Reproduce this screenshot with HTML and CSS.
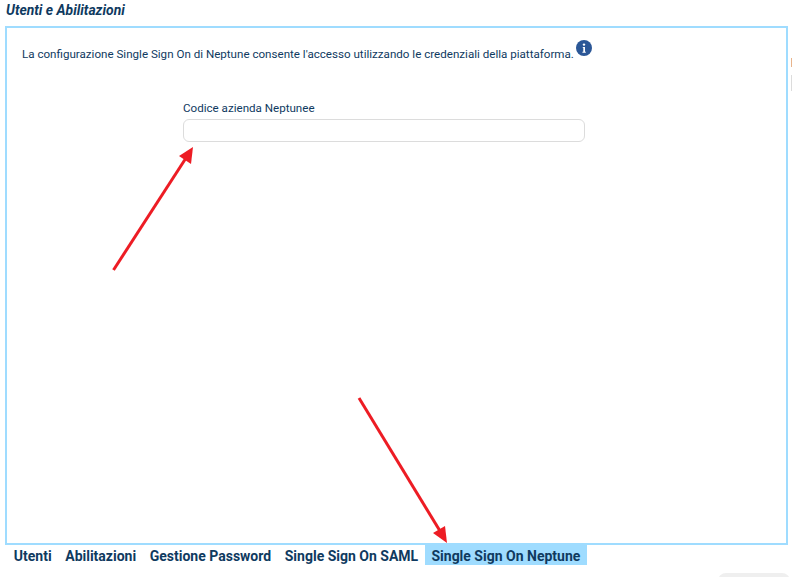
FILE: index.html
```html
<!DOCTYPE html>
<html lang="it">
<head>
    <meta charset="UTF-8">
    <title>Utenti e Abilitazioni</title>
    <link rel="stylesheet" href="styles.css">
</head>
<body>
    <div class="page">
        <h1 class="page_title">Utenti e Abilitazioni</h1>

        <div class="panel">
            <div class="intro">
                <span>La configurazione Single Sign On di Neptune consente l'accesso utilizzando le credenziali della piattaforma.</span>
                <svg class="info_icon" viewBox="0 0 16 16" aria-hidden="true">
                    <circle cx="8" cy="8" r="8" fill="#2b5797"/>
                    <circle cx="8" cy="4.6" r="1.2" fill="#fff"/>
                    <path d="M6.8 7.1h2.2v4.6h.8v1H6.4v-1h.9V8.1h-.5z" fill="#fff"/>
                </svg>
            </div>

            <div class="field">
                <label class="field_label" for="codice">Codice azienda Neptunee</label>
                <input class="field_input" id="codice" type="text">
            </div>
        </div>

        <div class="tabs">
            <span class="tab">Utenti</span>
            <span class="tab">Abilitazioni</span>
            <span class="tab">Gestione Password</span>
            <span class="tab">Single Sign On SAML</span>
            <span class="tab tab_active">Single Sign On Neptune</span>
        </div>

        <div class="corner_pill"></div>
    </div>

    <!-- next field, cut off by the right edge of the window -->
    <div class="edge_label"></div>
    <div class="edge_input"></div>

    <!-- red annotation arrows drawn on top of the screenshot -->
    <svg class="arrows" viewBox="0 0 792 577" aria-hidden="true">
        <line x1="113.5" y1="270" x2="186" y2="158" stroke="#ed1c24" stroke-width="3"/>
        <polygon points="193,147 191,164 179,156" fill="#ed1c24"/>
        <line x1="359" y1="398" x2="440" y2="531" stroke="#ed1c24" stroke-width="3"/>
        <polygon points="447,543 433,533 445,526" fill="#ed1c24"/>
    </svg>
</body>
</html>
```

FILE: styles.css
```css
/*tag*/
html, body{
    margin: 0;
    height: 100%;
    overflow: hidden;
    background: #fff;
}
body{
    position: relative;
    font-family: Roboto, "Liberation Sans", sans-serif;
    color: #0f3a5f;
}

/*class*/
.page{
    display: flex;
    flex-direction: column;
    align-items: flex-start;
    padding: 0 4px 0 5px;
    height: 577px;
    box-sizing: border-box;
}
.page_title{
    margin: 0;
    padding: 1px 0 0 1px;
    height: 26px;
    box-sizing: border-box;
    line-height: 19px;
    font-size: 13.9px;
    font-style: italic;
    font-weight: 700;
    color: #0f3a5f;
}
.panel{
    width: 783px;
    height: 519px;
    box-sizing: border-box;
    border: 2px solid #9fdcff;
    padding: 12px 15px 0;
}
.intro{
    display: flex;
    align-items: flex-start;
    font-size: 11.6px;
    line-height: 14px;
    height: 55px;
    padding-top: 7px;
    box-sizing: border-box;
}
.info_icon{
    width: 16px;
    height: 16px;
    margin: -7px 0 0 2px;
}
.field{
    display: flex;
    flex-direction: column;
    width: 402px;
    margin-left: 161px;
    padding-top: 6px;
}
.field_label{
    font-size: 11.6px;
    line-height: 14px;
    margin-bottom: 4px;
}
.field_input{
    height: 23px;
    box-sizing: border-box;
    border: 1px solid #dcdcdc;
    border-radius: 6px;
    background: #fff;
}
.tabs{
    display: flex;
    margin: -2px 0 0 2px;
}
.tab{
    font-size: 14px;
    font-weight: 700;
    line-height: 22px;
    height: 22px;
    box-sizing: border-box;
    padding: 2px 6.8px 0;
}
.tab_active{
    background: #9fdcff;
    padding: 2px 6.5px 0;
}
.corner_pill{
    position: absolute;
    left: 718px;
    top: 573px;
    width: 72px;
    height: 20px;
    border-radius: 8px;
    background: #efefef;
}
.edge_label{
    position: absolute;
    left: 791px;
    top: 58px;
    width: 1px;
    height: 9px;
    background: #e8b48c;
}
.edge_input{
    position: absolute;
    left: 791px;
    top: 75px;
    width: 1px;
    height: 16px;
    background: #dcdcdc;
}
.arrows{
    position: absolute;
    left: 0;
    top: 0;
    width: 792px;
    height: 577px;
    pointer-events: none;
}
```
